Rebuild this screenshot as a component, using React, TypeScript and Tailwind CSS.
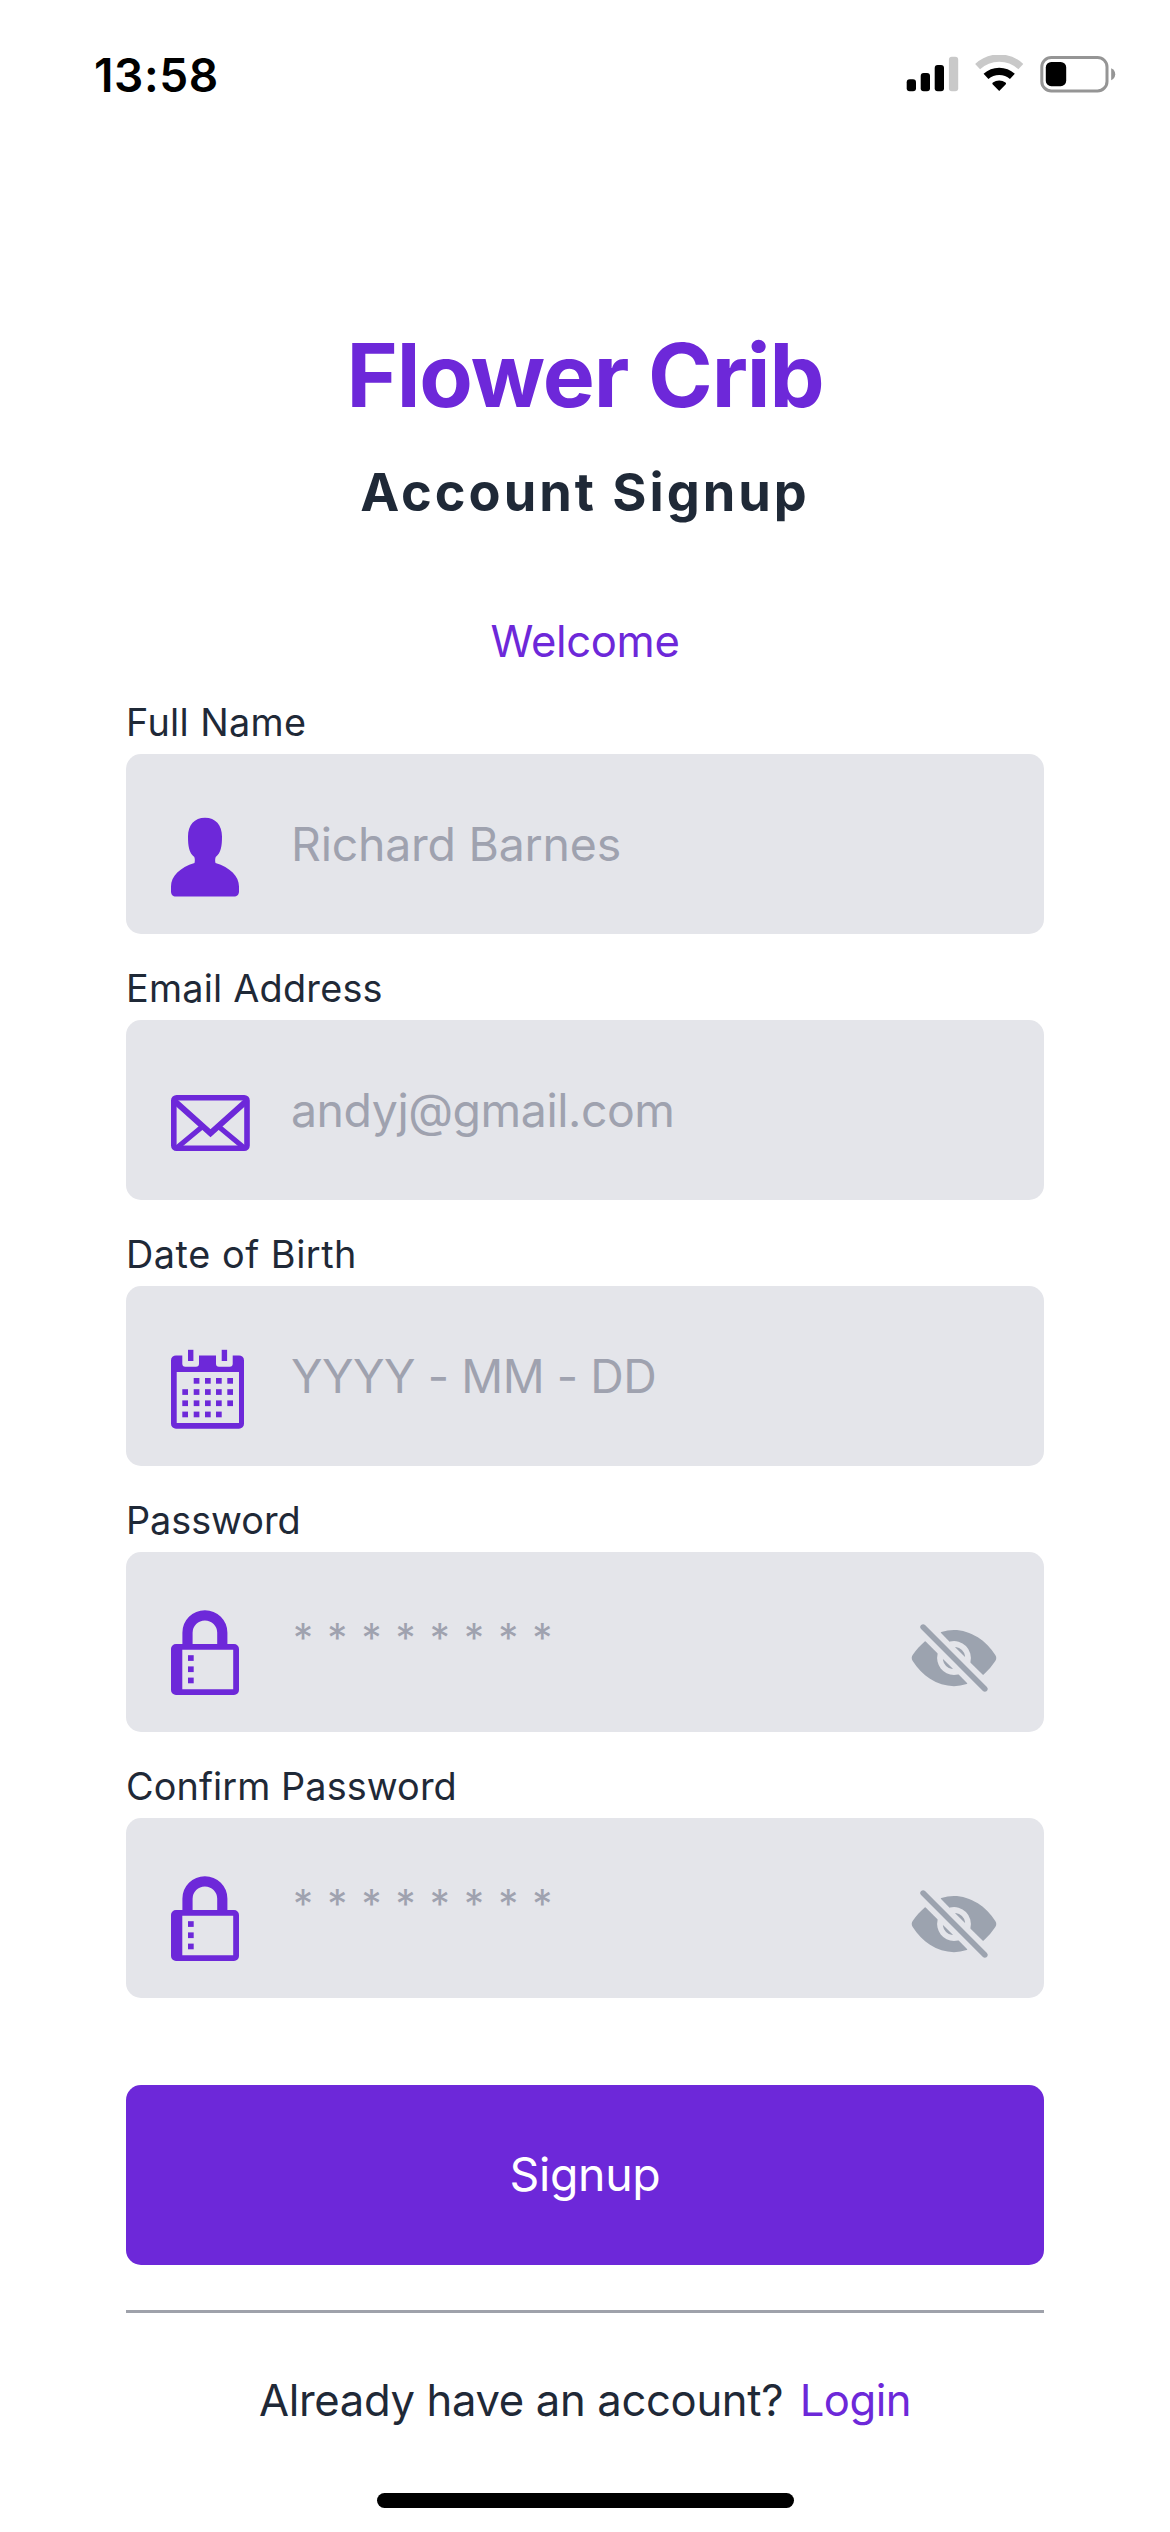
import type { ReactNode } from "react";
import { IoEyeOff } from "react-icons/io5";

function StatusIcons() {
  return (
    <svg width="210" height="39" viewBox="906 55 210 39" fill="none">
      <rect x="906.7" y="79.3" width="9.3" height="12" rx="3" fill="#000" />
      <rect x="920.7" y="73" width="9.3" height="18.3" rx="3" fill="#000" />
      <rect x="934.7" y="65" width="9.3" height="26.3" rx="3" fill="#000" />
      <rect x="948.9" y="56.8" width="9.3" height="34.5" rx="3" fill="#c9c9c9" />
      <path d="M977.6 66.600a31.500 31.500 0 0 1 43.200 0" stroke="#c9c9c9" strokeWidth="7.2" />
      <path d="M986 76.400a19.600 19.600 0 0 1 26.400 0" stroke="#000" strokeWidth="7.2" />
      <path
        d="M999.2 91l-6.4-6.400c-.6-.6-.6-1.500.1-2a10.200 10.200 0 0 1 12.600 0c.7.500.7 1.400.1 2z"
        fill="#000"
      />
      <rect x="1041.8" y="57.5" width="65.2" height="33.4" rx="9.5" stroke="#959595" strokeWidth="3" />
      <rect x="1045.8" y="62" width="20.4" height="24.2" rx="5.5" fill="#000" />
      <path d="M1111.200 68.200v12c2.400-1 4-3.300 4-6s-1.600-5-4-6z" fill="#959595" />
    </svg>
  );
}

function PersonIcon() {
  return (
    <svg className="size-[90px]" viewBox="0 0 90 90" fill="#6d28d9">
      <path d="M35 7.700C24.500 7.700 18 15 18 26.500C18 36 19 43 24.300 47C25 49 25 51 24.500 53C10 57.500 1 66 1 76.500V81.500C1 84.500 3 86.500 5.800 86.500H64C67 86.500 69 84.500 69 81.500V76.500C69 66 60 57.500 45.500 53C45 51 45 49 45.700 47C51 43 52 36 52 26.500C52 15 45.500 7.700 35 7.700Z" />
    </svg>
  );
}

function MailIcon() {
  return (
    <svg className="size-[90px]" viewBox="0 0 90 90" fill="none" stroke="#6d28d9">
      <rect x="3.800" y="21.700" width="73.200" height="50.600" rx="2.800" strokeWidth="5.600" />
      <path d="M4 24.500L40.500 57.300L77 24.500" strokeWidth="6" />
      <path d="M32.500 50.500L6 72.500M48.500 50.500L75 72.500" strokeWidth="5" />
    </svg>
  );
}

const calendarRows = [
  { y: 36, columns: [23.7, 35, 46, 57.3] },
  { y: 47.2, columns: [12.3, 23.7, 35, 46, 57.3] },
  { y: 58.4, columns: [12.3, 23.7, 35, 46, 57.3] },
  { y: 69.6, columns: [12.3, 23.7, 35, 46] },
];

function CalendarIcon() {
  return (
    <svg className="size-[90px]" viewBox="0 0 90 90" fill="#6d28d9">
      <path
        fillRule="evenodd"
        d="M6 13.400H12.300V21.700a3 3 0 0 0 3 3H26a3 3 0 0 0 3-3V13.400H46V21.700a3 3 0 0 0 3 3H59.700a3 3 0 0 0 3-3V13.400H69a5 5 0 0 1 5 5V81.700a5 5 0 0 1-5 5H6a5 5 0 0 1-5-5V18.400a5 5 0 0 1 5-5ZM6.700 30V81H69V30Z"
      />
      <rect x="18" y="7.800" width="5.400" height="11.200" />
      <rect x="51.700" y="7.800" width="5.400" height="11.200" />
      {calendarRows.map((row) =>
        row.columns.map((x) => <rect key={`${row.y}-${x}`} x={x} y={row.y} width="5.700" height="5.700" />),
      )}
    </svg>
  );
}

function LockIcon() {
  return (
    <svg className="size-[90px]" viewBox="0 0 90 90" fill="#6d28d9">
      <path d="M17.500 38V24.700a17.400 17.400 0 0 1 34.800 0V38" fill="none" stroke="#6d28d9" strokeWidth="10.200" />
      <path
        fillRule="evenodd"
        d="M6 36H64a5 5 0 0 1 5 5V82a5 5 0 0 1-5 5H6a5 5 0 0 1-5-5V41a5 5 0 0 1 5-5ZM12.300 41.700V81.300H63.200V41.700Z"
      />
      <rect x="18" y="47.200" width="5.700" height="5.700" />
      <rect x="18" y="58.400" width="5.700" height="5.700" />
      <rect x="18" y="69.600" width="5.700" height="5.700" />
    </svg>
  );
}

type FieldProps = {
  label: string;
  labelClass: string;
  icon: ReactNode;
  placeholder: string;
  inputClass: string;
  secret?: boolean;
};

function Field({ label, labelClass, icon, placeholder, inputClass, secret }: FieldProps) {
  return (
    <label className="flex flex-col gap-2">
      <span className={`text-[37.8px] leading-[48px] text-[#1f2937] ${labelClass}`}>{label}</span>
      <span className="flex h-[180px] rounded-[15px] bg-[#e4e5ea] pr-[45px] pl-11">
        <span className="mt-14 shrink-0">{icon}</span>
        <input
          className={`ml-[31px] h-full min-w-0 flex-1 bg-transparent outline-none placeholder:text-[#9fa2af] placeholder:opacity-100 ${inputClass}`}
          placeholder={placeholder}
        />
        {secret && <IoEyeOff className="mt-[61px] size-[90px] shrink-0 text-[#9ca3af]" />}
      </span>
    </label>
  );
}

const starsClass = "pb-[9px] pl-[2px] text-[40px] tracking-[1.45px]";

export default function App() {
  return (
    <div className="flex h-[2532px] w-[1170px] flex-col overflow-hidden bg-white font-['Inter',sans-serif]">
      <header className="flex h-[149px] items-center justify-between pr-[54px] pl-[94px]">
        <span className="text-[46px] leading-none font-semibold tracking-[0.6px] text-black">13:58</span>
        <StatusIcons />
      </header>

      <main className="flex flex-col px-[126px]">
        <h1 className="mt-44 text-center text-[87.5px] leading-[100px] font-bold tracking-[-1.08px] text-[#6d28d9]">
          Flower Crib
        </h1>
        <h2 className="mt-8 text-center text-[52.3px] leading-[70px] font-bold tracking-[3px] text-[#1f2937]">
          Account Signup
        </h2>
        <p className="mt-[85px] text-center text-[43.6px] leading-[60px] tracking-[-0.35px] text-[#6d28d9]">
          Welcome
        </p>

        <form className="mt-[26px] flex flex-col gap-[30px]">
          <Field
            label="Full Name"
            labelClass="tracking-[0.36px]"
            icon={<PersonIcon />}
            placeholder="Richard Barnes"
            inputClass="text-[46.4px] tracking-[-0.2px]"
          />
          <Field
            label="Email Address"
            labelClass="tracking-[0.22px]"
            icon={<MailIcon />}
            placeholder="andyj@gmail.com"
            inputClass="text-[46.4px] tracking-[-0.44px]"
          />
          <Field
            label="Date of Birth"
            labelClass="tracking-[0.55px]"
            icon={<CalendarIcon />}
            placeholder="YYYY - MM - DD"
            inputClass="text-[46.4px] tracking-[-0.45px]"
          />
          <Field
            label="Password"
            labelClass="tracking-[-0.05px]"
            icon={<LockIcon />}
            placeholder="* * * * * * * *"
            inputClass={starsClass}
            secret
          />
          <Field
            label="Confirm Password"
            labelClass="tracking-[0.1px]"
            icon={<LockIcon />}
            placeholder="* * * * * * * *"
            inputClass={starsClass}
            secret
          />
        </form>

        <button
          type="button"
          className="mt-[87px] h-[180px] rounded-[15px] bg-[#6d28d9] text-[46.4px] tracking-[-0.3px] text-white"
        >
          Signup
        </button>
        <div className="mt-[45px] h-[3px] bg-[#9fa2ab]" />
        <div className="mt-[58px] flex justify-center gap-[16.5px] text-[43.6px] leading-[60px]">
          <span className="tracking-[-0.34px] text-[#1f2937]">Already have an account?</span>
          <a className="tracking-[-0.5px] text-[#6d28d9]">Login</a>
        </div>
      </main>

      <div className="mt-[62px] h-[15px] w-[417px] self-center rounded-full bg-black" />
    </div>
  );
}
